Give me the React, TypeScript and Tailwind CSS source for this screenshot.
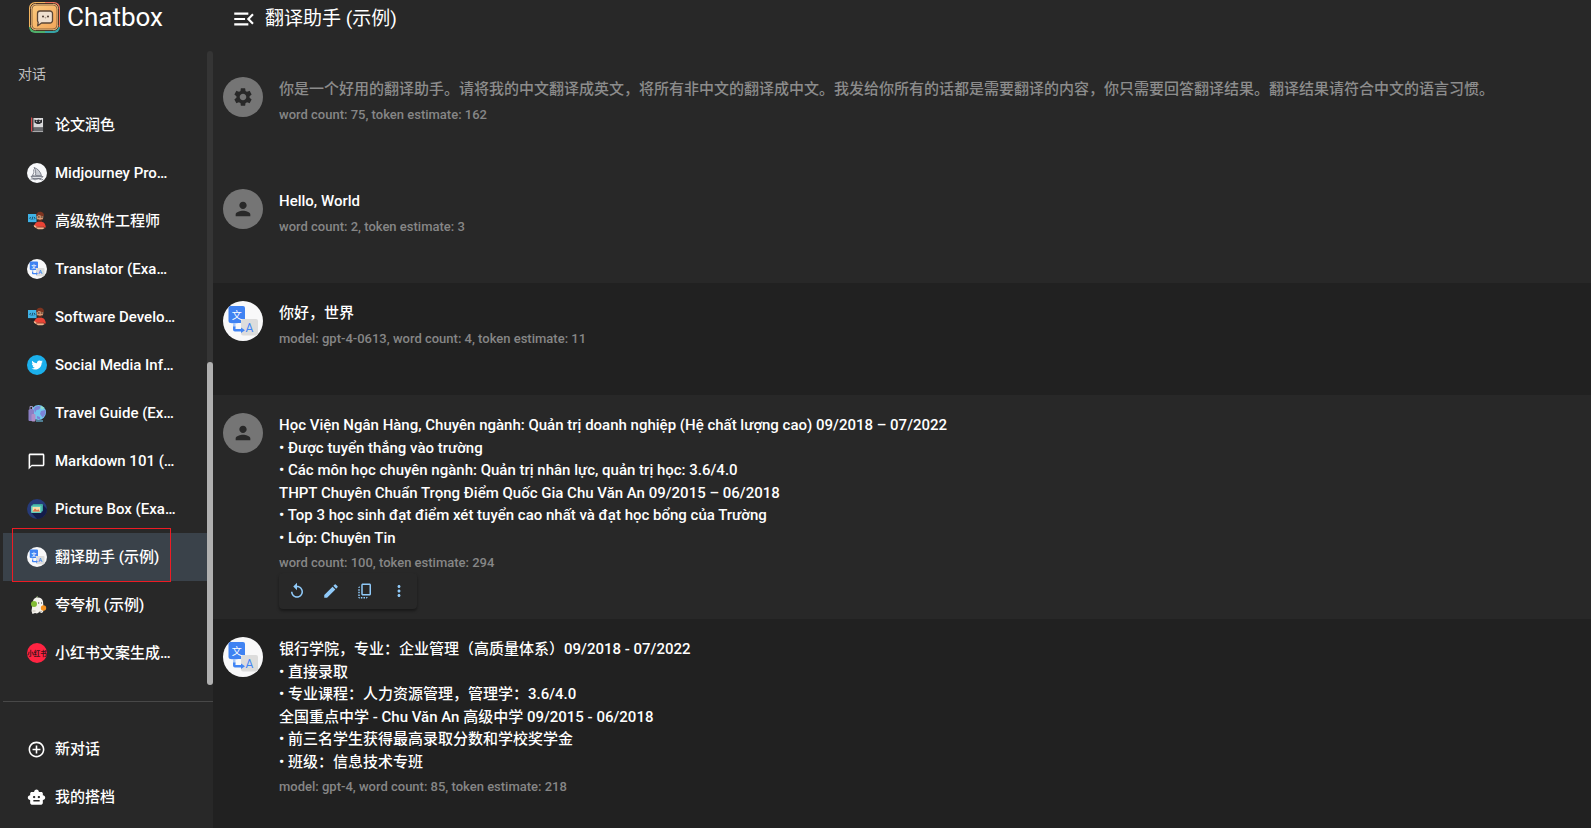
import React from 'react';
import {
  MdAddCircleOutline,
  MdChatBubbleOutline,
  MdCopyAll,
  MdEdit,
  MdMenuOpen,
  MdMoreVert,
  MdPerson,
  MdReplay,
  MdSettings,
  MdSmartToy,
} from 'react-icons/md';

interface Session {
  id: number;
  name: string;
  icon: React.ReactNode;
}

interface Message {
  id: number;
  role: 'system' | 'user' | 'assistant';
  lines: string[];
  meta: string;
  showActions?: boolean;
}

function AppLogo() {
  return (
    <svg viewBox="0 0 31 31" className="h-[31px] w-[31px] shrink-0" aria-hidden="true">
      <defs>
        <linearGradient id="logo-face" x1="0" y1="0" x2="1" y2="1">
          <stop offset="0" stopColor="#fbc97c" />
          <stop offset="1" stopColor="#f2a65a" />
        </linearGradient>
        <clipPath id="logo-clip">
          <rect width="31" height="31" rx="6" />
        </clipPath>
      </defs>
      <g clipPath="url(#logo-clip)">
        <rect width="16" height="25" fill="#f2b45f" />
        <rect x="16" width="15" height="25" fill="#f0735a" />
        <rect y="25" width="16" height="6" fill="#4fae6b" />
        <rect x="16" y="25" width="15" height="6" fill="#36a3a6" />
      </g>
      <rect x="1.500" y="1.500" width="28" height="27" rx="5" fill="#f7c98a" stroke="#4d3726" strokeWidth="1" />
      <rect x="3" y="3" width="25" height="24" rx="4" fill="url(#logo-face)" stroke="#7a5534" strokeWidth=".8" />
      <path
        d="M11 9h10a2.500 2.500 0 0 1 2.500 2.500v7a2.500 2.500 0 0 1-2.500 2.500h-8.500l-3.800 2.800.5-3.600a2.500 2.500 0 0 1-.7-1.700v-7A2.500 2.500 0 0 1 11 9z"
        fill="#eedfcf"
        stroke="#5b4636"
        strokeWidth="1.300"
        strokeLinejoin="round"
      />
      <circle cx="14" cy="14.500" r="1" fill="#4a3a30" />
      <circle cx="19" cy="14.500" r="1" fill="#4a3a30" />
      <path d="M15.800 15.500q.7.600 1.400 0" fill="none" stroke="#4a3a30" strokeWidth=".6" />
    </svg>
  );
}

function TranslateIcon({ className }: { className: string }) {
  return (
    <svg viewBox="0 0 40 40" className={className} aria-hidden="true">
      <circle cx="20" cy="20" r="20" fill="#f8f8f9" />
      <rect x="18" y="18" width="17" height="16.500" rx="2" fill="#dcdcdc" />
      <path d="M10 26.500v-4H8l3.300-3.500 3.500 3.500h-2.300v4z" fill="#a9c9fb" />
      <path d="M10 25.500h2.500v2.500h5.500v-1.500l4 2.800-4 2.700v-1.500h-6q-2 0-2-2z" fill="#4285f4" />
      <path d="M5.500 7a2 2 0 0 1 2-2H20a2 2 0 0 1 2 2v11h-4v4H7.500a2 2 0 0 1-2-2z" fill="#3f82f2" />
      <text x="13.700" y="17.500" textAnchor="middle" fontSize="10" fill="#fff" className="font-['Noto_Sans_CJK_SC',sans-serif]">
        文
      </text>
      <text x="26.500" y="30.500" textAnchor="middle" fontSize="12" fill="#4285f4" className="font-[Roboto,sans-serif]">
        A
      </text>
    </svg>
  );
}

function BookIcon() {
  return (
    <svg viewBox="0 0 20 20" className="h-5 w-5" aria-hidden="true">
      <path d="M4 3h12.500v14.500H5L4 16.500z" fill="#37383b" />
      <path d="M4 2.500h1.200v14H4z" fill="#d64a4a" />
      <path d="M6.500 3H16v9.500H6.500z" fill="#d9d9da" />
      <path d="M7.500 4.500l2 .8 2-.8 2 .8 1.500-.8v3l-2.500 1.500h-2.500l-2.500-1.500z" fill="#2d2d30" />
      <path d="M9 6.300h1.200M12 6.300h1.200" stroke="#f5f5f5" strokeWidth=".8" />
      <path d="M6.500 12.500H16V16H6.500z" fill="#68696c" />
      <path d="M5.500 16.500H16" stroke="#c5c5c6" strokeWidth=".8" />
    </svg>
  );
}

function SailboatIcon() {
  return (
    <svg viewBox="0 0 20 20" className="h-5 w-5" aria-hidden="true">
      <circle cx="10" cy="10" r="10" fill="#f8f9fb" />
      <path d="M7 4.500c4 1.200 6.500 4.300 7.500 8.200L8.500 12.500C9 9.500 8.500 6.800 7 4.500z" fill="#c9ccd3" stroke="#5a5f6c" strokeWidth=".7" />
      <path d="M6.500 6.500C7.200 8.800 7 10.700 5 12.500l2.800-.2" fill="none" stroke="#5a5f6c" strokeWidth=".7" />
      <path d="M4 13.500h12l-1.800 2H5.800z" fill="#dfe1e6" stroke="#5a5f6c" strokeWidth=".7" />
      <path d="M3.500 16.300q1.500-1 3 0t3.200 0 3.300 0 3.200 0" fill="none" stroke="#5a5f6c" strokeWidth=".7" />
    </svg>
  );
}

function EngineerIcon() {
  return (
    <svg viewBox="0 0 20 20" className="h-5 w-5" aria-hidden="true">
      <path d="M1 3h8.500v8.500H1z" fill="#3fb2e5" />
      <path d="M3.800 6L2.700 7.200l1.100 1.200M7 6l1.100 1.200L7 8.400M5.800 5.700l-.8 3" fill="none" stroke="#14364c" strokeWidth=".8" />
      <path d="M1 11.800h8M4 13h3.500" stroke="#14202a" strokeWidth="1" />
      <path d="M7 15.500c.5-3.500 2.500-5 6-5s5.500 2 5.800 6H9z" fill="#ea4335" />
      <path d="M6.800 14l4 1.800h5.500l1.200 1.500-2 1H11l-4-2.500z" fill="#efb48c" />
      <path d="M9 16h8" stroke="#8f1d17" strokeWidth=".8" />
      <circle cx="13" cy="6" r="3.300" fill="#dd9b73" />
      <path d="M9.300 5C9 2.500 10.700.8 13 .7c2.700 0 4.300 1.800 3.800 4.300-2.500.2-4-.5-5-1.200-.4.900-1.200 1.200-2.500 1.200z" fill="#7d3420" />
      <path d="M10.700 6h2M13.700 6h2" stroke="#252020" strokeWidth="1" />
      <path d="M10.500 7.800q2.500 2 5 0-.3 2.700-2.500 2.900-2.200-.2-2.500-2.900z" fill="#5e2d1e" />
    </svg>
  );
}

function TwitterIcon() {
  return (
    <svg viewBox="0 0 20 20" className="h-5 w-5" aria-hidden="true">
      <circle cx="10" cy="10" r="10" fill="#1bb0ec" />
      <g transform="translate(4 4) scale(.5)">
        <path
          d="M23.643 4.937c-.835.37-1.732.62-2.675.733.962-.576 1.700-1.490 2.048-2.578-.9.534-1.897.922-2.958 1.130-.85-.904-2.060-1.470-3.400-1.470-2.572 0-4.658 2.086-4.658 4.660 0 .364.042.718.120 1.060-3.873-.195-7.304-2.050-9.602-4.868-.4.690-.63 1.490-.63 2.342 0 1.616.823 3.043 2.072 3.878-.764-.025-1.482-.234-2.110-.583v.06c0 2.257 1.605 4.140 3.737 4.568-.392.106-.803.162-1.227.162-.3 0-.593-.028-.877-.082.593 1.850 2.313 3.198 4.352 3.234-1.595 1.250-3.604 1.995-5.786 1.995-.376 0-.747-.022-1.112-.065 2.062 1.323 4.510 2.093 7.140 2.093 8.570 0 13.255-7.098 13.255-13.254 0-.2-.005-.402-.014-.602.910-.658 1.700-1.477 2.323-2.410z"
          fill="#fff"
        />
      </g>
    </svg>
  );
}

function TravelIcon() {
  return (
    <svg viewBox="0 0 20 20" className="h-5 w-5" aria-hidden="true">
      <circle cx="11.500" cy="9.500" r="7.500" fill="#72c6ee" />
      <path d="M7 5.500c2-3 5-3 7-1.500l-2 2.500-2.500.5L8 10zM14 8l4.500-1c.5 3.500-1 6-3 7.500L13 11zM10 13l3 1v2.500l-3-1z" fill="#7c84d8" />
      <path d="M14 3l3 1.500-1.500 2-2-1.500z" fill="#8fe0c8" />
      <path d="M1.500 7.500q0-1.500 1.500-1.500h2.500Q7 6 7 7.500V18H2.500q-1 0-1-1z" fill="#8b7fc4" />
      <path d="M3 6V3.500h2.500V6" fill="none" stroke="#b9a9e0" strokeWidth=".8" />
      <rect x="4.500" y="11" width="4" height="7.500" rx="1" fill="#b08fc8" />
      <path d="M9 18h7" stroke="#6ab7dd" strokeWidth="1.200" />
    </svg>
  );
}

function PictureIcon() {
  return (
    <svg viewBox="0 0 20 20" className="h-5 w-5" aria-hidden="true">
      <circle cx="10" cy="10" r="10" fill="#263a78" />
      <path d="M16 6l4 4c0 5.500-4.500 10-10 10l-5.500-6z" fill="#131c4a" />
      <rect x="5.500" y="5" width="10.500" height="7.500" rx="1" fill="#3ca59a" />
      <rect x="4" y="6.500" width="10.500" height="7.500" rx="1" fill="#62cdbb" />
      <rect x="5.500" y="8" width="7.500" height="4.500" fill="#f5dfaa" />
      <path d="M5.500 12.500L8 9.500l2 1.700 1.300-1 1.700 2.300z" fill="#e0764b" />
    </svg>
  );
}

function PraiseIcon() {
  return (
    <svg viewBox="0 0 20 20" className="h-5 w-5" aria-hidden="true">
      <path d="M9.500 3.500Q9.300 2 10.800 1.500" stroke="#8aa86a" strokeWidth="1.200" fill="none" />
      <path d="M6 6q1-4 5-3.500 4 0 5 4l.5 6q.5 5-2 5.500l-2-1-2.500 1.500-2-.5-2.500 1-1-3z" fill="#f4f2ec" />
      <circle cx="7" cy="9" r="3" fill="#83bd35" />
      <circle cx="16.500" cy="13" r="2.700" fill="#f7931e" />
      <path d="M11 8h1.200M14 8h1" stroke="#333" strokeWidth="1" />
      <path d="M5.500 16h3M12 16.500h3" stroke="#b9b3a6" strokeWidth=".8" />
    </svg>
  );
}

function RedNoteIcon() {
  return (
    <svg viewBox="0 0 20 20" className="h-5 w-5" aria-hidden="true">
      <circle cx="10" cy="10" r="10" fill="#ff2442" />
      <text x="10" y="12.500" textAnchor="middle" fontSize="6.500" fontWeight="700" fill="#3b1218" className="font-['Noto_Sans_CJK_SC',sans-serif]">
        小红书
      </text>
    </svg>
  );
}

const sessions: Session[] = [
  { id: 1, name: '论文润色', icon: <BookIcon /> },
  { id: 2, name: 'Midjourney Pro…', icon: <SailboatIcon /> },
  { id: 3, name: '高级软件工程师', icon: <EngineerIcon /> },
  { id: 4, name: 'Translator (Exa…', icon: <TranslateIcon className="h-5 w-5" /> },
  { id: 5, name: 'Software Develo…', icon: <EngineerIcon /> },
  { id: 6, name: 'Social Media Inf…', icon: <TwitterIcon /> },
  { id: 7, name: 'Travel Guide (Ex…', icon: <TravelIcon /> },
  { id: 8, name: 'Markdown 101 (…', icon: <MdChatBubbleOutline className="h-[19px] w-[19px]" /> },
  { id: 9, name: 'Picture Box (Exa…', icon: <PictureIcon /> },
  { id: 10, name: '翻译助手 (示例)', icon: <TranslateIcon className="h-5 w-5" /> },
  { id: 11, name: '夸夸机 (示例)', icon: <PraiseIcon /> },
  { id: 12, name: '小红书文案生成…', icon: <RedNoteIcon /> },
];

const messages: Message[] = [
  {
    id: 1,
    role: 'system',
    lines: [
      '你是一个好用的翻译助手。请将我的中文翻译成英文，将所有非中文的翻译成中文。我发给你所有的话都是需要翻译的内容，你只需要回答翻译结果。翻译结果请符合中文的语言习惯。',
    ],
    meta: 'word count: 75, token estimate: 162',
  },
  { id: 2, role: 'user', lines: ['Hello, World'], meta: 'word count: 2, token estimate: 3' },
  { id: 3, role: 'assistant', lines: ['你好，世界'], meta: 'model: gpt-4-0613, word count: 4, token estimate: 11' },
  {
    id: 4,
    role: 'user',
    lines: [
      'Học Viện Ngân Hàng, Chuyên ngành: Quản trị doanh nghiệp (Hệ chất lượng cao) 09/2018 – 07/2022',
      '• Được tuyển thẳng vào trường',
      '• Các môn học chuyên ngành: Quản trị nhân lực, quản trị học: 3.6/4.0',
      'THPT Chuyên Chuẩn Trọng Điểm Quốc Gia Chu Văn An 09/2015 – 06/2018',
      '• Top 3 học sinh đạt điểm xét tuyển cao nhất và đạt học bổng của Trường',
      '• Lớp: Chuyên Tin',
    ],
    meta: 'word count: 100, token estimate: 294',
    showActions: true,
  },
  {
    id: 5,
    role: 'assistant',
    lines: [
      '银行学院，专业：企业管理（高质量体系）09/2018 - 07/2022',
      '• 直接录取',
      '• 专业课程：人力资源管理，管理学：3.6/4.0',
      '全国重点中学 - Chu Văn An 高级中学 09/2015 - 06/2018',
      '• 前三名学生获得最高录取分数和学校奖学金',
      '• 班级：信息技术专班',
    ],
    meta: 'model: gpt-4, word count: 85, token estimate: 218',
  },
];

const actions = [
  { label: 'Regenerate', icon: <MdReplay /> },
  { label: 'Edit', icon: <MdEdit /> },
  { label: 'Copy', icon: <MdCopyAll /> },
  { label: 'More', icon: <MdMoreVert /> },
];

function Avatar({ role }: { role: Message['role'] }) {
  if (role === 'assistant') {
    return <TranslateIcon className="h-10 w-10 shrink-0" />;
  }
  return (
    <div className="flex h-10 w-10 shrink-0 items-center justify-center rounded-full bg-[#757575] text-[#282828]">
      {role === 'system' ? <MdSettings className="h-[22px] w-[22px]" /> : <MdPerson className="h-[22px] w-[22px]" />}
    </div>
  );
}

function MessageRow({ message }: { message: Message }) {
  const isAssistant = message.role === 'assistant';

  return (
    <div className={`flex min-h-[112px] shrink-0 gap-4 px-[10px] pt-[18px] pb-[10px] ${isAssistant ? 'bg-[#212121]' : 'bg-[#282828]'}`}>
      <Avatar role={message.role} />
      <div className="min-w-0 flex-1 pt-px">
        <div className={`text-[15px] leading-normal font-medium ${message.role === 'system' ? 'text-[#8c8c8c]' : 'text-white'}`}>
          {message.lines.map((line, i) => (
            <p key={i}>{line}</p>
          ))}
        </div>
        <p className="mt-1 text-[13px] leading-5 font-medium text-[#868686]">{message.meta}</p>
        <div className="h-9">
          {message.showActions && (
            <div className="inline-flex h-9 rounded bg-[#282828] px-px shadow-[0_2px_3px_rgba(0,0,0,0.4)]">
              {actions.map(action => (
                <button
                  key={action.label}
                  type="button"
                  aria-label={action.label}
                  className="flex w-[34px] items-center justify-center text-[18px] text-[#90caf9]"
                >
                  {action.icon}
                </button>
              ))}
            </div>
          )}
        </div>
      </div>
    </div>
  );
}

function SidebarItem({ icon, name, selected }: { icon: React.ReactNode; name: string; selected?: boolean }) {
  return (
    <button
      type="button"
      className={`relative flex h-12 w-full items-center gap-2 pl-6 text-left text-[15px] font-medium whitespace-nowrap text-white ${
        selected ? 'bg-[#3a424a]' : ''
      }`}
    >
      <span className="flex w-5 shrink-0">{icon}</span>
      {name}
      {selected && <span className="absolute -top-[5px] -bottom-px left-[9px] w-[159px] border border-[#ed1c24]" />}
    </button>
  );
}

export default function App() {
  return (
    <div className="flex h-screen overflow-hidden bg-[#282828] font-[Roboto,'Noto_Sans_CJK_SC',sans-serif] text-white">
      <aside className="flex w-[213px] shrink-0 flex-col pl-[3px]">
        <div className="flex h-[51px] shrink-0 items-start gap-[7px] pt-[2px] pl-[26px]">
          <AppLogo />
          <h1 className="text-[26px] leading-[31px]">Chatbox</h1>
        </div>

        <div className="flex min-h-0 flex-1">
          <nav className="min-w-0 flex-1 overflow-hidden">
            <h2 className="h-[50px] pl-[15px] text-[14px] leading-[46px] text-[#bebebe]">对话</h2>
            {sessions.map(session => (
              <SidebarItem key={session.id} icon={session.icon} name={session.name} selected={session.id === 10} />
            ))}
          </nav>
          <div className="flex w-[6px] shrink-0 flex-col justify-end rounded-full bg-[#353535]">
            <div className="h-[51%] rounded-full bg-[#b0b0b0]" />
          </div>
        </div>

        <div className="mt-4 border-t border-[#484848] pt-[23px] pb-[7px]">
          <SidebarItem icon={<MdAddCircleOutline className="h-[19px] w-[19px]" />} name="新对话" />
          <SidebarItem icon={<MdSmartToy className="h-[19px] w-[19px]" />} name="我的搭档" />
        </div>
      </aside>

      <main className="flex min-w-0 flex-1 flex-col">
        <header className="flex h-[59px] shrink-0 items-start gap-2 pt-1 pl-[18px]">
          <button type="button" aria-label="Toggle sidebar" className="flex h-[30px] items-center">
            <MdMenuOpen className="h-[26px] w-[26px]" />
          </button>
          <h2 className="text-[19px] leading-[30px]">翻译助手 (示例)</h2>
        </header>
        <div className="flex min-h-0 flex-1 flex-col overflow-hidden bg-[#212121]">
          {messages.map(message => (
            <MessageRow key={message.id} message={message} />
          ))}
        </div>
      </main>
    </div>
  );
}
